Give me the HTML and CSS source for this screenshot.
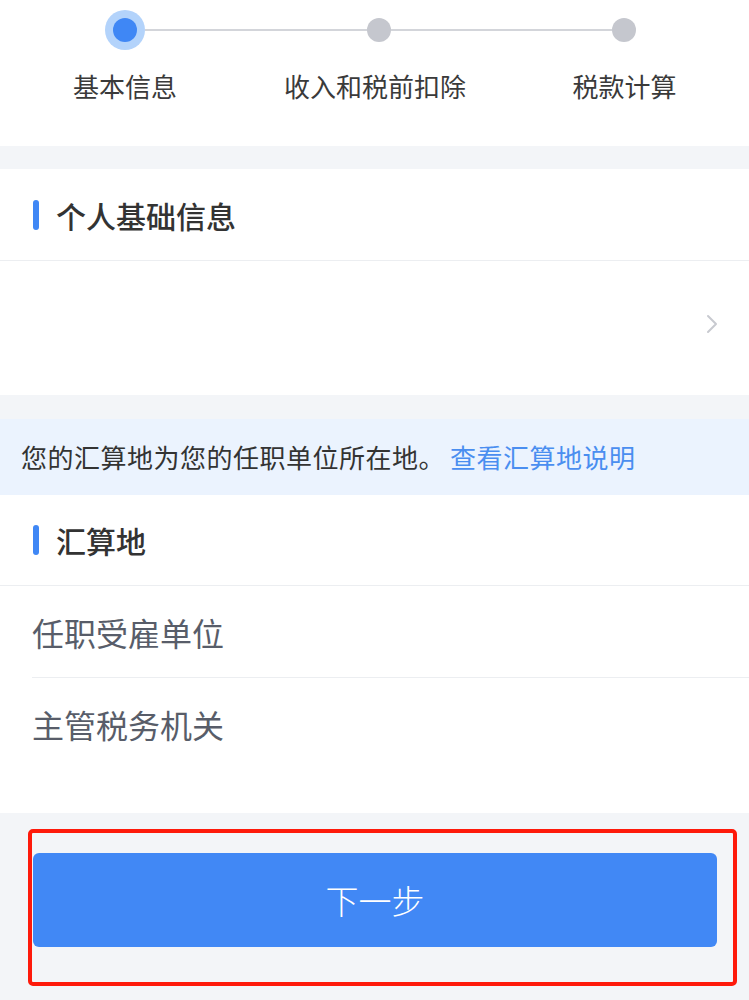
FILE: index.html
```html
<!DOCTYPE html>
<html lang="zh-CN">
<head>
<meta charset="utf-8">
<title>个税汇算</title>
<link rel="stylesheet" href="styles.css">
</head>
<body>
<div class="page">
  <section class="stepper">
    <div class="track">
      <span class="dot dot-active"><span class="dot-core"></span></span>
      <span class="line"></span>
      <span class="dot"></span>
      <span class="line"></span>
      <span class="dot"></span>
    </div>
    <div class="labels">
      <span class="label">基本信息</span>
      <span class="label">收入和税前扣除</span>
      <span class="label">税款计算</span>
    </div>
  </section>

  <section class="card card-basic">
    <div class="card-head"><span class="bar"></span><span class="title">个人基础信息</span></div>
    <div class="link-row">
      <svg class="chevron" width="12" height="20" viewBox="0 0 12 20"><path d="M2 2 L10 10 L2 18" fill="none" stroke="#c8cad0" stroke-width="2" stroke-linecap="round" stroke-linejoin="round"/></svg>
    </div>
  </section>

  <div class="notice">您的汇算地为您的任职单位所在地。<a class="notice-link">查看汇算地说明</a></div>

  <section class="card card-place">
    <div class="card-head"><span class="bar"></span><span class="title">汇算地</span></div>
    <div class="rows">
      <div class="row">任职受雇单位</div>
      <div class="row">主管税务机关</div>
    </div>
  </section>

  <div class="footer">
    <div class="highlight">
      <button class="next">下一步</button>
    </div>
  </div>
</div>
</body>
</html>
```
FILE: styles.css
```css
* { box-sizing: border-box; }
html, body { margin: 0; padding: 0; }
body {
  background: #f3f5f8;
  font-family: "Noto Sans CJK SC", "Noto Sans", sans-serif;
  color: #333;
}
.page { width: 749px; min-height: 1000px; background: #f3f5f8; }

.stepper { background: #fff; height: 146px; padding-top: 10px; }
.track {
  display: flex;
  align-items: center;
  height: 40px;
  padding-left: 105px;
  padding-right: 113px;
}
.dot {
  width: 24px; height: 24px; border-radius: 50%;
  background: #c5c7ce; flex: none;
  display: flex; align-items: center; justify-content: center;
}
.dot-active { width: 40px; height: 40px; background: #b3d3fb; }
.dot-core { width: 24px; height: 24px; border-radius: 50%; background: #3f87f5; }
.line { flex: 1; height: 2px; background: #d3d5da; }
.labels {
  display: grid;
  grid-template-columns: 250px 250px 249px;
  margin-top: 18px;
}
.label {
  text-align: center;
  font-size: 26px;
  line-height: 36px;
  color: #3a3a3a;
}

.card { background: #fff; }
.card-basic { margin-top: 23px; }
.card-head {
  height: 92px;
  display: flex;
  align-items: center;
  padding-left: 33px;
  border-bottom: 1px solid #eceef1;
}
.bar { width: 6px; height: 30px; border-radius: 3px; background: #3f87f5; margin-right: 17px; }
.title { font-size: 30px; font-weight: 500; color: #333; line-height: 40px; }

.link-row {
  height: 134px;
  display: flex;
  align-items: center;
  justify-content: flex-end;
  padding-right: 31px;
  padding-bottom: 8px;
}

.notice {
  margin-top: 24px;
  height: 76px;
  background: #ebf3fe;
  display: flex;
  align-items: center;
  padding-left: 21px;
  font-size: 26px;
  line-height: 36px;
  color: #333;
  letter-spacing: 0.5px;
}
.notice-link { color: #4a8ef0; margin-left: 5px; }

.card-place .card-head { height: 91px; }
.rows { padding-left: 32px; padding-bottom: 43px; }
.row {
  height: 92px;
  display: flex;
  align-items: center;
  font-size: 32px;
  color: #585d69;
  border-bottom: 1px solid #eceef1;
}
.row:last-child { border-bottom: none; }

.footer { padding-top: 16px; padding-left: 28px; }
.highlight {
  width: 709px;
  height: 157px;
  border: 4px solid #fe1a0b;
  border-radius: 5px;
  padding: 20px 0 0 1px;
}
.next {
  width: 684px;
  height: 94px;
  border: none;
  border-radius: 6px;
  background: #4188f5;
  color: #fff;
  font-family: "Noto Sans CJK SC", "Noto Sans", sans-serif;
  font-size: 33px;
  font-weight: 300;
  padding: 0;
}
```
